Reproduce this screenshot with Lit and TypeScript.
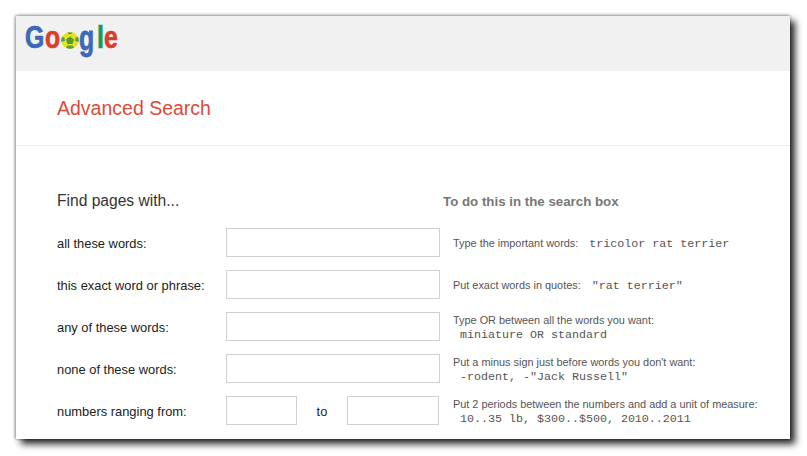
import { LitElement, html, css } from "lit";
import { customElement } from "lit/decorators.js";

const rows = [
  { label: "all these words:", single: true, text: "Type the important words:", code: "tricolor rat terrier" },
  { label: "this exact word or phrase:", single: true, text: "Put exact words in quotes:", code: "\"rat terrier\"" },
  { label: "any of these words:", single: false, text: "Type OR between all the words you want:", code: "miniature OR standard" },
  { label: "none of these words:", single: false, text: "Put a minus sign just before words you don't want:", code: "-rodent, -\"Jack Russell\"" },
  { label: "numbers ranging from:", single: false, range: true, text: "Put 2 periods between the numbers and add a unit of measure:", code: "10..35 lb, $300..$500, 2010..2011" },
];

@customElement("app-root")
export class AppRoot extends LitElement {
  static styles = css`
    :host { display: block; width: 807px; height: 456px; overflow: hidden; background: #fff; font-family: "Liberation Sans", Arial, sans-serif; }
    .stage { padding: 16px 17px 0 16px; }
    .win { height: 423px; background: #fff; overflow: hidden; box-shadow: 5px 5px 7px rgba(0,0,0,.85), 0 -1px 3px rgba(0,0,0,.25), -1px 0 3px rgba(0,0,0,.3); }
    .top { height: 55px; background: #f1f1f1; padding-left: 9px; }
    .logo { display: flex; align-items: flex-start; width: 100px; padding-top: 7px; line-height: 30px; font-size: 31px; font-weight: 700; }
    .l { display: block; width: var(--w); -webkit-text-stroke: .7px currentColor; }
    .l span { display: inline-block; transform: scaleX(.8); transform-origin: 0 50%; }
    .l.tall span { transform: scale(.8, 1.14); transform-origin: 0 8px; }
    .blue { color: #3b68b8; } .red { color: #dc3e2c; } .green { color: #0f9d58; }
    .ball { width: 18px; height: 17px; margin: 9px 0 0 1px; flex: none; }
    .head { height: 74px; border-bottom: 1px solid #ebebeb; padding-left: 41px; display: flex; align-items: center; }
    h1 { margin: 0; font-size: 19.5px; font-weight: 400; color: #dd4b39; }
    .heads { display: flex; padding: 45px 0 0 41px; height: 20px; align-items: center; }
    h2 { margin: 0; width: 386px; font-size: 15.6px; font-weight: 400; color: #333; }
    h3 { margin: 0; font-size: 13.3px; font-weight: 700; color: #777; }
    .form { display: flex; flex-direction: column; gap: 13px; padding: 17px 0 0 41px; }
    .row { display: grid; grid-template-columns: 169px 214px 1fr; grid-template-rows: 29px; align-items: center; }
    .label { font-size: 12.9px; color: #222; padding-top: 1px; }
    .box { box-sizing: border-box; height: 29px; border: 1px solid #d0d0d0; background: #fff; }
    .range { display: flex; align-items: center; width: 213px; }
    .range .box { width: 71px; }
    .range .box + .to + .box { width: 92px; }
    .to { width: 50px; text-align: center; font-size: 12.9px; color: #222; padding-top: 1px; }
    .hint { padding: 3px 0 0 13px; font-size: 10.9px; color: #555; white-space: nowrap; line-height: 15px; }
    code { font-family: "Liberation Mono", monospace; font-size: 11.67px; color: #555; }
    .inline code { margin-left: 11px; }
    .block code { display: block; margin-left: 7px; }
  `;

  render() {
    return html`<div class="stage"><div class="win">
      <div class="top"><div class="logo">
        <span class="l blue" style="--w:20px"><span>G</span></span>
        <span class="l red" style="--w:15px"><span>o</span></span>
        <svg class="ball" viewBox="0 0 18 17">
          <ellipse cx="9" cy="8.5" rx="8.8" ry="8.3" fill="#e8e21c"/>
          <path d="M9 4.600l4 2.900-1.500 4.500H6.500L5 7.500z" fill="#4f9a45"/>
          <path d="M6 .7L9 2.400 12 .7A8.800 8.300 0 0 0 6 .7zM16.900 4.800l-2.500 1-.3 3.200 3.600 .8A8.800 8.300 0 0 0 16.900 4.800zM1.100 4.800l2.500 1 .3 3.200-3.600 .8A8.800 8.300 0 0 1 1.100 4.800zM5 15.800l1.300-2.400h5.400l1.300 2.400a8.800 8.300 0 0 1-8 0z" fill="#55a046"/>
        </svg>
        <span class="l blue tall" style="--w:18px"><span>g</span></span>
        <span class="l green" style="--w:7px"><span>l</span></span>
        <span class="l red" style="--w:15px"><span>e</span></span>
      </div></div>
      <div class="head"><h1>Advanced Search</h1></div>
      <div class="heads"><h2>Find pages with...</h2><h3>To do this in the search box</h3></div>
      <div class="form">
        ${rows.map((r) => html`<div class="row">
          <div class="label">${r.label}</div>
          ${r.range
            ? html`<div class="range"><div class="box"></div><div class="to">to</div><div class="box"></div></div>`
            : html`<div class="box"></div>`}
          <div class="hint ${r.single ? "inline" : "block"}">${r.text}<code>${r.code}</code></div>
        </div>`)}
      </div>
    </div></div>`;
  }
}
